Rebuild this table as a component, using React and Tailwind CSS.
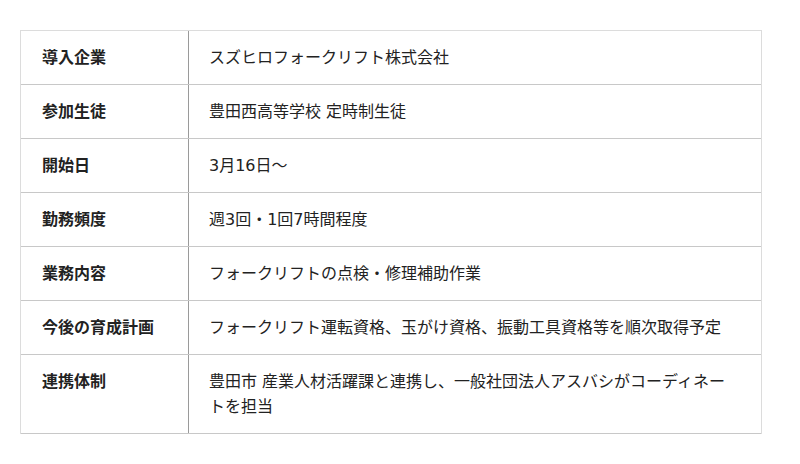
const rows = [
  { label: '導入企業', value: 'スズヒロフォークリフト株式会社' },
  { label: '参加生徒', value: '豊田西高等学校 定時制生徒' },
  { label: '開始日', value: '3月16日〜' },
  { label: '勤務頻度', value: '週3回・1回7時間程度' },
  { label: '業務内容', value: 'フォークリフトの点検・修理補助作業' },
  { label: '今後の育成計画', value: 'フォークリフト運転資格、玉がけ資格、振動工具資格等を順次取得予定' },
  {
    label: '連携体制',
    value: (
      <>
        豊田市 産業人材活躍課と連携し、一般社団法人アスバシがコーディネー
        <br />
        トを担当
      </>
    ),
  },
];

export default function App() {
  return (
    <div
      className="w-[800px] h-[464px] bg-white pt-[30px] pl-[20px] text-[#222]"
      style={{ fontFamily: '"DejaVu Sans", "Noto Sans CJK JP", sans-serif' }}
    >
      <div className="w-[742px] border-t border-l border-r border-[#dcdcdc]">
        {rows.map((r) => (
          <div key={r.label} className="flex border-b border-[#c8c8c8]">
            <div className="w-[168px] shrink-0 px-[21px] py-[14px] text-[16px] leading-[25px] font-bold border-r border-[#9a9a9a]">
              {r.label}
            </div>
            <div className="flex-1 px-[20px] py-[14px] text-[16px] leading-[25px]">
              {r.value}
            </div>
          </div>
        ))}
      </div>
    </div>
  );
}
